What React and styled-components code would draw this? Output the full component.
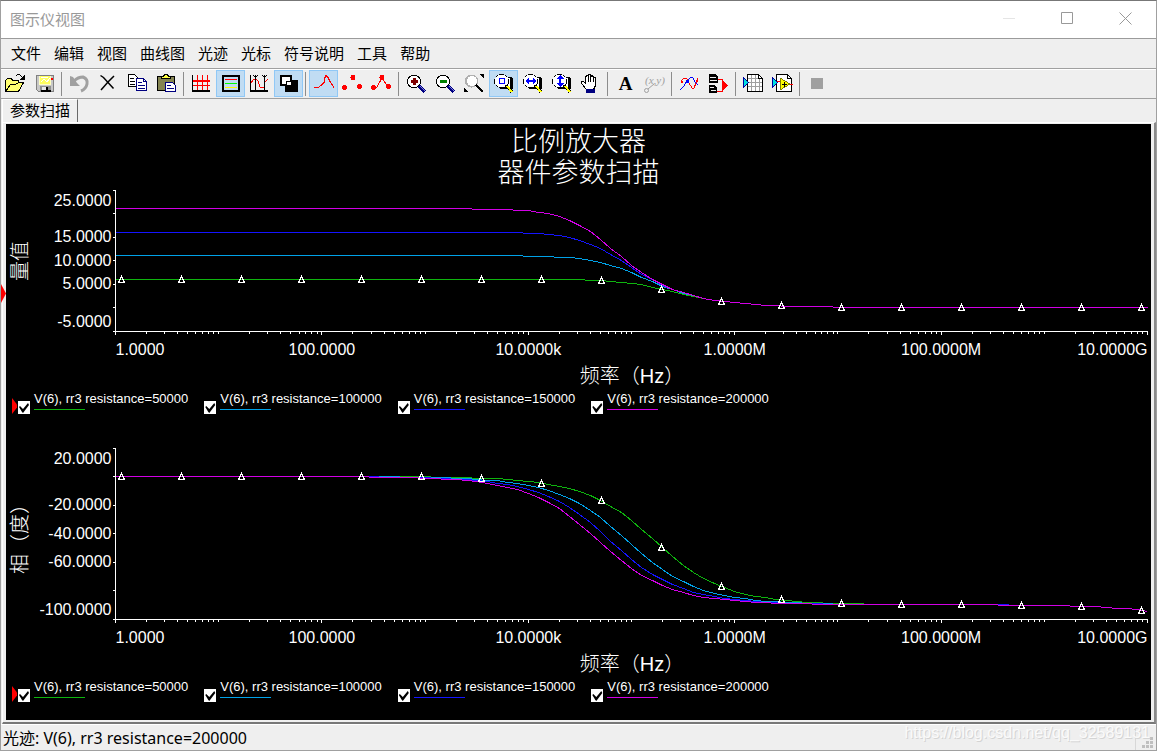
import React, { useLayoutEffect, useRef, useState } from 'react'
import styled, { createGlobalStyle } from 'styled-components'

const GlobalStyle = createGlobalStyle`
  * { box-sizing: border-box; }
  body { margin: 0; background: #efefef; }
  button { font: inherit; color: inherit; background: none; border: 0; padding: 0; }
`

const Window = styled.div`
  display: flex;
  flex-direction: column;
  min-height: 100vh;
  border: 1px solid #a0a0a0;
  border-top-color: #777;
  background: #efefef;
  color: #000;
  font: 15px/20px "Noto Sans CJK SC", sans-serif;
`

const TitleBar = styled.header`
  display: flex;
  align-items: center;
  justify-content: space-between;
  height: 38px;
  padding: 0 2px 2px 9px;
  background: #fff;
  border-bottom: 1px solid #9b9b9b;
  color: #999;
`

const Caption = styled.h1`
  margin: 0;
  font-size: 15px;
  font-weight: 400;
`

const WindowButtons = styled.div`
  display: flex;
`

const WindowButton = styled.button`
  display: grid;
  place-items: center;
  width: 58px;
  height: 34px;
  color: ${(p) => (p.$faint ? '#e5e5e5' : '#999')};
`

const MenuBar = styled.nav`
  display: flex;
  align-items: center;
  gap: 13px;
  height: 30px;
  padding: 0 0 2px 10px;
  border-bottom: 1px solid #a0a0a0;
`

const ToolBar = styled.div`
  display: flex;
  height: 30px;
  border-top: 1px solid #fff;
  border-bottom: 1px solid #a0a0a0;
`

const ToolButton = styled.button`
  display: grid;
  place-items: center;
  width: 29px;
  height: 27px;
  border: 1px solid ${(p) => (p.$on ? '#90c8f6' : 'transparent')};
  background: ${(p) => (p.$on ? '#c0dcf3' : 'transparent')};

  svg { display: block; }
`

const Divider = styled.span`
  width: 1px;
  height: 24px;
  margin: 2px 3px 0 2px;
  background: #8c8c8c;
`

const Tabs = styled.div`
  display: flex;
  height: 23px;
  padding-left: 1px;
`

const Tab = styled.button`
  padding: 0 7px 4px 7px;
  border-left: 1px solid #fff;
  border-top: 1px solid #fff;
  border-right: 1px solid #696969;
`

const Frame = styled.main`
  position: relative;
  display: flex;
  flex: 1;
  margin: 0 0 0 1px;
  padding: 1px 3px 2px 3px;
  border-left: 1px solid #fff;
  border-top: 1px solid #fff;
  border-right: 2px solid #8a8a8a;
  border-bottom: 2px solid #777;
`

const PageMark = styled.i`
  position: absolute;
  left: -2px;
  top: 161px;
  width: 5px;
  height: 19px;
  background: #f00;
  clip-path: polygon(0 0, 100% 50%, 0 100%);
`

const Plot = styled.section`
  flex: 1;
  min-width: 0;
  padding-bottom: 1px;
  background: #000;
  color: #fff;
`

const PlotTitle = styled.h2`
  margin: 0;
  padding-bottom: 1px;
  font-size: 27px;
  line-height: 31px;
  font-weight: 300;
  text-align: center;
`

const ChartSvg = styled.svg`
  display: block;
  width: 100%;
  fill: #fff;
  font: 16px "Liberation Sans", Arial, sans-serif;

  .name {
    font: 300 20px "Liberation Sans", "Noto Sans CJK SC", sans-serif;
  }
`

const Legend = styled.div`
  display: flex;
  flex-wrap: wrap;
  align-items: flex-end;
  gap: 16px;
  min-height: 28px;
  margin-bottom: ${(p) => (p.$last ? 0 : 29)}px;
  padding: 2px 0 2px 6px;
`

const LegendItem = styled.label`
  display: flex;
  align-items: flex-end;
  font: 13px/16px "Liberation Sans", Arial, sans-serif;
`

const ActiveMark = styled.i`
  width: 5px;
  height: 16px;
  margin: 0 1px 0 0;
  background: #f00;
  clip-path: polygon(0 0, 100% 40%, 100% 60%, 0 100%);
`

const Check = styled.input`
  appearance: none;
  width: 12px;
  height: 13px;
  margin: 0 4px 0 0;
  background: #fff;

  &:checked::before {
    content: "";
    display: block;
    width: 12px;
    height: 13px;
    background: #000;
    clip-path: polygon(1px 6px, 2px 5px, 5px 8px, 10px 2px, 11px 4px, 5px 12px, 4px 11px);
  }
`

const LegendText = styled.span`
  padding-bottom: 4px;
`

const Swatch = styled.span`
  display: block;
  width: 51px;
  height: 1px;
  margin-top: 2px;
  background: ${(p) => p.$color};
`

const StatusBar = styled.footer`
  position: relative;
  display: flex;
  align-items: center;
  justify-content: space-between;
  height: 26px;
  padding: 0 2px;
  border-top: 1px solid #fff;
  font-family: "Noto Sans", "Noto Sans CJK SC", sans-serif;
  font-size: 16px;
`

const Grip = styled.div`
  display: flex;
  align-items: flex-end;
  height: 24px;
  padding-left: 6px;
  border-left: 1px solid #d7d7d7;

  svg { display: block; }
`

const Watermark = styled.span`
  position: absolute;
  right: 6px;
  top: -2px;
  color: #fafafa;
  font: 16px/20px "Liberation Sans", Arial, sans-serif;
  text-shadow: 1px 1px 0 #d4d4d4;
`

const GREEN = '#0eb40e'
const CYAN = '#00a2e8'
const BLUE = '#1414ff'
const MAGENTA = '#d200e6'

const traces = [
  { r: 50000, color: GREEN },
  { r: 100000, color: CYAN },
  { r: 150000, color: BLUE },
  { r: 200000, color: MAGENTA },
]

// non-inverting stage: gain 1 + R/10k, 1 MHz gain-bandwidth op amp
const gainOf = (r) => 1 + r / 10000
const magnitude = (r, f) => gainOf(r) / Math.hypot(1, (f * gainOf(r)) / 1e6)
const phase = (r, f) =>
  (-(Math.atan((f * gainOf(r)) / 1e6) + Math.atan(f / 125e9)) * 180) / Math.PI

const charts = [
  {
    name: '量值',
    fn: magnitude,
    top: 25,
    bottom: -5,
    step: 5,
    height: 141,
    labels: [25, 15, 10, 5, -5],
  },
  {
    name: '相（度）',
    fn: phase,
    top: 20,
    bottom: -100,
    step: 20,
    height: 171,
    labels: [20, -20, -40, -60, -100],
  },
]

const xLabels = ['1.0000', '100.0000', '10.0000k', '1.0000M', '100.0000M', '10.0000G']
const snap = (v) => Math.floor(v) + 0.5

function Chart({ chart }) {
  const ref = useRef(null)
  const [width, setWidth] = useState(1145)

  useLayoutEffect(() => {
    const measure = () => setWidth(ref.current.clientWidth || ref.current.parentNode.clientWidth)
    measure()
    window.addEventListener('resize', measure)
    return () => window.removeEventListener('resize', measure)
  }, [])

  const left = 109.5
  const right = width - 3.5
  const y0 = 3.5
  const y1 = y0 + chart.height
  const xOf = (d) => left + ((right - left) * d) / 10
  const yOf = (v) => 3 + ((chart.top - v) * chart.height) / (chart.top - chart.bottom)

  const line = (r) => {
    const pts = []
    for (let i = 0; i <= 100; i++) {
      pts.push(`${snap(xOf(i / 10))},${snap(yOf(chart.fn(r, 10 ** (i / 10))))}`)
    }
    return pts.join(' ')
  }

  let ticks = ''
  for (let v = chart.bottom; v <= chart.top; v += chart.step) {
    ticks += `M${left - 3} ${snap(yOf(v))}H${left}`
  }
  for (let d = 0; d <= 10; d++) {
    ticks += `M${snap(xOf(d))} ${y1}v${d % 2 ? 2 : 3}`
    for (let m = 2; d < 10 && m < 10; m++) ticks += `M${snap(xOf(d + Math.log10(m)))} ${y1}v2`
  }

  const marks = []
  for (let x = left + 6; x < right; x += 60) {
    const f = 10 ** (((x - left) / (right - left)) * 10)
    const y = snap(yOf(chart.fn(50000, f)))
    marks.push(`M${x} ${y - 3}l3 6h-6z`)
  }

  const labelY = (v) => {
    if (v === chart.top) return y0 + 15
    if (v === chart.bottom) return y1 - 5
    return Math.round(yOf(v)) + 5
  }
  const midY = Math.round((y0 + y1) / 2)
  const midX = Math.round((left + right) / 2)

  return (
    <ChartSvg ref={ref} height={chart.height + 60} role="img" aria-label={chart.name}>
      <g fill="none" shapeRendering="crispEdges">
        <path d={`M${left} ${y0}V${y1}H${right}`} stroke="#fff" />
        <path d={ticks} stroke="#fff" />
        {traces.map((t) => (
          <polyline key={t.r} points={line(t.r)} stroke={t.color} />
        ))}
        <path d={marks.join('')} stroke="#fff" />
      </g>
      {chart.labels.map((v) => (
        <text key={v} x={left - 4} y={labelY(v)} textAnchor="end">{v.toFixed(4)}</text>
      ))}
      {xLabels.map((t, i) => (
        <text
          key={t}
          x={xOf(i * 2)}
          y={y1 + 23}
          textAnchor={i === 0 ? 'start' : i === 5 ? 'end' : 'middle'}
        >
          {t}
        </text>
      ))}
      <text className="name" x={midX} y={y1 + 51} textAnchor="middle">频率（Hz）</text>
      <text className="name" textAnchor="middle" transform={`translate(21 ${midY}) rotate(-90)`}>
        {chart.name}
      </text>
    </ChartSvg>
  )
}

function ChartLegend({ last }) {
  return (
    <Legend $last={last}>
      {traces.map((t, i) => (
        <LegendItem key={t.r}>
          {i === 0 && <ActiveMark />}
          <Check type="checkbox" defaultChecked />
          <LegendText>
            V(6), rr3 resistance={t.r}
            <Swatch $color={t.color} />
          </LegendText>
        </LegendItem>
      ))}
    </Legend>
  )
}

const Lens = ({ children }) => (
  <>
    <path d="M12 4h6l2 2v10h-13v-3h5z" fill="#000" />
    <path d="M12 5h5v9h-5z" fill="#fff" />
    <path d="M5 2h7l3 3v6l-3 3h-7l-3-3v-6z" fill="#fff" />
    <path d="M6 1.5h5M6 14.500h5M1.500 6v5M15.500 6v5M3 4l2-2M12 2l2 2M3 12l2 2M12 14l2-2" stroke="#000" />
    <path d="M13 12l6 7" stroke="#000" strokeWidth="3" />
    <path d="M14 13l5 6" stroke="#ff0" strokeWidth="2" />
    {children}
  </>
)

const Magnifier = ({ children }) => (
  <>
    <circle cx="8" cy="8.5" r="6.5" fill="#fff" stroke="#000" />
    <path d="M13 13l6 6" stroke="#000080" strokeWidth="3" />
    <path d="M14 13l5 5" stroke="#8080e0" />
    {children}
  </>
)

const icons = {
  open: (
    <>
      <path d="M.5 18.5v-11l2-2h4l1 2h6v4" fill="#ffff70" stroke="#000" />
      <path d="M.5 18.5l5-7h5l3-2h5l-5 9z" fill="#ffff70" stroke="#000" />
      <path d="M10.5 3.5l2-2h2l4 4" stroke="#000" fill="none" />
      <path d="M20 1v6h-6z" fill="#000" />
    </>
  ),
  save: (
    <>
      <path d="M2.500 2.500h17v16h-15l-2-2z" fill="#c8c8c8" stroke="#808080" />
      <path d="M5 3h12v9h-12z" fill="#ffffc0" />
      <path d="M6 3h10v8h-10z" fill="#ffff60" />
      <path d="M7 9l3-3 3 3 3-4M7 4h7" stroke="#fff" fill="none" />
      <path d="M17 5h2v2h-2z" fill="#f00" />
      <path d="M6 13h11v6h-11z" fill="#909090" />
      <path d="M8 14h6v4h-6z" fill="#e8e8e8" />
      <path d="M7 17h10v2h-10zM12 14h2v3h-2z" fill="#000" />
    </>
  ),
  undo: (
    <>
      <path d="M1 3v10h10l-3-3-4-6z" fill="#a0a0a0" />
      <path d="M5 8q4-4 9-4 5 2 4 7-1 5-6 7" fill="none" stroke="#a0a0a0" strokeWidth="3" />
    </>
  ),
  remove: (
    <>
      <path d="M2.500 2.500l3 2 10 11" stroke="#000" strokeWidth="1.500" fill="none" />
      <path d="M16 3l-6 6-7 8" stroke="#000" strokeWidth="1.500" fill="none" />
    </>
  ),
  copy: (
    <>
      <path d="M1.5 1.5h6l3 3v9h-9z" fill="#fff" stroke="#000" />
      <path d="M3 5.5h4M3 8.5h5M3 11.5h5" stroke="#000" />
      <path d="M9.5 5.5h7l3 3v9h-10z" fill="#fff" stroke="#000080" />
      <path d="M16.5 5.5v3h3" fill="none" stroke="#000080" />
      <path d="M11 9.5h4M11 12.5h7M11 15.5h7" stroke="#000080" />
    </>
  ),
  paste: (
    <>
      <path d="M1.5 3.5h17v14h-17z" fill="#858552" stroke="#000" />
      <path d="M5.5 5.5v-2h2l1-2h3l1 2h2v2z" fill="#ffff40" stroke="#000" />
      <path d="M9.500 9.500h7l3 3v6h-10z" fill="#fff" stroke="#000080" />
      <path d="M11 12.500h4M11 15.500h7" stroke="#000080" />
    </>
  ),
  grid: (
    <>
      <path d="M1 7.500h18M1 12.500h18M6.500 2v15M11.500 2v15M16.500 2v15" stroke="#f00" />
      <path d="M1 8.500h18" stroke="#f00" />
      <path d="M1.500 2v17" stroke="#000" />
      <path d="M1 17h18v2h-18z" fill="#000" />
    </>
  ),
  legend: (
    <>
      <path d="M3 3h16v15h-16z" fill="#c0dcf3" stroke="#000" strokeWidth="2" />
      <path d="M5 6h12v1h-12z" fill="#f00" />
      <path d="M5 10h12v1h-12z" fill="#0f0" />
      <path d="M5 14h12v1h-12z" fill="#ff0" />
    </>
  ),
  cursors: (
    <>
      <path d="M1 11l4-5 2 0 2 2 2 6 2 1 2-1 1-5 3-3" fill="none" stroke="#f00" />
      <path d="M1.500 2v16M6.500 2v16M15.500 2v16M4 2l2.500 2 2.500-2M13 2l2.500 2 2.500-2" fill="none" stroke="#000" />
      <path d="M1 17h18v2h-18z" fill="#000" />
    </>
  ),
  invert: (
    <>
      <path d="M7 7h13v12h-13z" fill="#000" />
      <path d="M3 3h10v9h-10z" fill="#fff" stroke="#000" strokeWidth="2" />
      <path d="M8 8h5v4h-5z" fill="#fff" stroke="#000" />
    </>
  ),
  line: <path d="M1 14.500h4l3-2 3-3 0-3 2-4 2 2 2 4 2 3 2 3" fill="none" stroke="#f00" />,
  dots: (
    <g fill="#f00">
      <circle cx="2.500" cy="14.500" r="2.500" />
      <circle cx="11" cy="4.500" r="2.500" />
      <circle cx="17.500" cy="13.500" r="2.500" />
    </g>
  ),
  lineDots: (
    <g fill="#f00">
      <circle cx="2.500" cy="14.500" r="2.500" />
      <circle cx="11" cy="4.500" r="2.500" />
      <circle cx="17.500" cy="13.500" r="2.500" />
      <path d="M2 14h4l5-9 6 9" fill="none" stroke="#f00" />
    </g>
  ),
  zoomIn: (
    <Magnifier>
      <path d="M8 5v7M4.500 8.500h7" stroke="#800000" strokeWidth="3" />
    </Magnifier>
  ),
  zoomOut: (
    <Magnifier>
      <path d="M4.500 8.500h7" stroke="#008000" strokeWidth="3" />
    </Magnifier>
  ),
  zoomFull: (
    <>
      <circle cx="7.500" cy="8" r="6.500" fill="#b0b0b0" />
      <circle cx="8" cy="8" r="5" fill="#fff" />
      <path d="M12 12l7 7" stroke="#000" strokeWidth="2" />
      <path d="M15 1h5v5zM0 15v4h4z" fill="#000" />
    </>
  ),
  zoomBox: (
    <Lens>
      <path d="M6.500 5.500h5v5h-5z" fill="none" stroke="#00f" />
    </Lens>
  ),
  zoomX: (
    <Lens>
      <path d="M4 8l3-4v3h4v-3l3 4-3 4v-3h-4v3z" fill="#00f" />
    </Lens>
  ),
  zoomY: (
    <Lens>
      <path d="M9 2l4 4h-3v4h3l-4 4-4-4h3v-4h-3z" fill="#00f" />
    </Lens>
  ),
  hand: (
    <>
      <path
        d="M6.500 16.500l-5-6v-2h2l2 2v-7l2-1 1 1v-2h2v2l2-1 1 2 1.500 0 .5 2v6l-2 4z"
        fill="#fff"
        stroke="#000"
      />
      <path d="M8.500 4v5M10.500 3v6M13 5v4" stroke="#000" />
      <path d="M6 16h9v4h-9z" fill="#000080" />
    </>
  ),
  text: (
    <text x="10.500" y="17" textAnchor="middle" fontFamily="Liberation Serif, serif" fontWeight="700" fontSize="19">A</text>
  ),
  point: (
    <>
      <text x="11" y="11" textAnchor="middle" fontFamily="Liberation Serif, serif" fontStyle="italic" fontSize="11" fill="#a0a0a0">(x,y)</text>
      <path d="M4 16l6-5" stroke="#a0a0a0" />
      <circle cx="2.500" cy="17.500" r="2" fill="none" stroke="#a0a0a0" />
    </>
  ),
  overlay: (
    <>
      <path d="M2 8l3-3 3 1 2 4 3 5 2 0 2-5 2-5" fill="none" stroke="#f00" />
      <path d="M1 17l4-4 3-5 4-4 2 1 2 4 3 3" fill="none" stroke="#00f" />
      <path d="M7 7h3v3h-3z" fill="#00f" />
      <path d="M2 8h2v2h-2zM17 7h2v2h-2z" fill="#f00" />
    </>
  ),
  connector: (
    <>
      <path d="M1 1h6l3 2v7h-9zM1 12h5l3 2v6h-8z" fill="#000" />
      <path d="M2 4.500h6M2 7.500h7M2 14.500h4M3 17.500h5" stroke="#efefef" />
      <path d="M10 6.500h4v12h-5M14 12.500h3" fill="none" stroke="#f00" />
      <path d="M15 8l5 4.500-5 4.500z" fill="#f00" />
    </>
  ),
  sheet: (
    <>
      <path d="M4.500 1.500h11l4 4v13h-15z" fill="#fff" stroke="#000" />
      <path d="M5 5.500h10M5 9.500h14M5 13.500h14M8.500 2v16M12.500 2v16M16.500 6v12" stroke="#a0a0a0" />
      <path d="M15.500 1.500v4h4" fill="none" stroke="#000" />
      <path d="M.5 4.500l5 5-5 5z" fill="#00e0e0" stroke="#0000a0" />
    </>
  ),
  amp: (
    <>
      <path d="M4.500 1.500h11l4 4v13h-15z" fill="#fff" stroke="#000" />
      <path d="M15.500 1.500v4h4" fill="none" stroke="#000" />
      <path d="M5 8.500h4M17 11.500h4" stroke="#f00" />
      <path d="M8 5l10 6-10 6z" fill="#ffff00" stroke="#808000" />
      <path d="M12.500 9v5M10 11.500h5" stroke="#000" />
      <path d="M.5 4.500l5 5-5 5z" fill="#00e0e0" stroke="#0000a0" />
    </>
  ),
  stop: <path d="M4 5h12v11h-12z" fill="#a0a0a0" />,
}

const tools = [
  ['open', 'save'],
  ['undo', 'remove', 'copy', 'paste'],
  ['grid', 'legend', 'cursors', 'invert'],
  ['line', 'dots', 'lineDots'],
  ['zoomIn', 'zoomOut', 'zoomFull', 'zoomBox', 'zoomX', 'zoomY', 'hand'],
  ['text', 'point'],
  ['overlay', 'connector'],
  ['sheet', 'amp'],
  ['stop'],
]
const pressed = ['legend', 'invert', 'line', 'zoomBox']
const smooth = ['text', 'point', 'undo', 'remove']

const menus = ['文件', '编辑', '视图', '曲线图', '光迹', '光标', '符号说明', '工具', '帮助']

const App = () => {
  return (
    <Window>
      <GlobalStyle />
      <TitleBar>
        <Caption>图示仪视图</Caption>
        <WindowButtons>
          <WindowButton $faint aria-label="minimize">
            <svg width="13" height="13"><path d="M0 6.500h12" stroke="currentColor" /></svg>
          </WindowButton>
          <WindowButton aria-label="maximize">
            <svg width="13" height="13"><path d="M.5.5h11v11h-11z" fill="none" stroke="currentColor" /></svg>
          </WindowButton>
          <WindowButton aria-label="close">
            <svg width="13" height="13"><path d="M.5.5l12 12M12.500.5l-12 12" stroke="currentColor" /></svg>
          </WindowButton>
        </WindowButtons>
      </TitleBar>
      <MenuBar>
        {menus.map((m) => <button key={m}>{m}</button>)}
      </MenuBar>
      <ToolBar>
        {tools.map((group, i) => (
          <React.Fragment key={i}>
            {i > 0 && <Divider />}
            {group.map((name) => (
              <ToolButton key={name} aria-label={name} $on={pressed.includes(name)}>
                <svg width="21" height="21" shapeRendering={smooth.includes(name) ? 'auto' : 'crispEdges'}>
                  {icons[name]}
                </svg>
              </ToolButton>
            ))}
          </React.Fragment>
        ))}
      </ToolBar>
      <Tabs>
        <Tab>参数扫描</Tab>
      </Tabs>
      <Frame>
        <PageMark />
        <Plot>
          <PlotTitle>比例放大器<br />器件参数扫描</PlotTitle>
          {charts.map((c, i) => (
            <React.Fragment key={c.name}>
              <Chart chart={c} />
              <ChartLegend last={i === charts.length - 1} />
            </React.Fragment>
          ))}
        </Plot>
      </Frame>
      <StatusBar>
        <span>光迹: V(6), rr3 resistance=200000</span>
        <Grip>
          <svg width="12" height="13" fill="#bfbfbf">
            <path d="M8 0h3v3h-3zM8 4h3v3h-3zM4 4h3v3h-3zM8 8h3v3h-3zM4 8h3v3h-3zM0 8h3v3h-3z" />
          </svg>
        </Grip>
        <Watermark>https://blog.csdn.net/qq_32589131</Watermark>
      </StatusBar>
    </Window>
  )
}

export default App
